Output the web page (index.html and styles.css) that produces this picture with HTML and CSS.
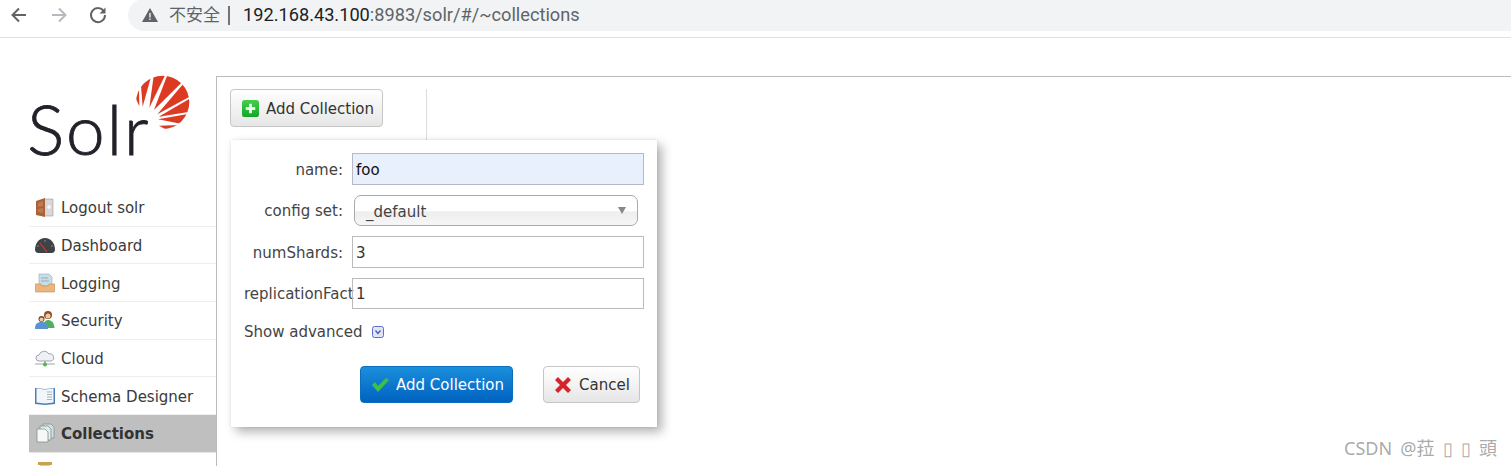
FILE: index.html
```html
<!DOCTYPE html>
<html lang="zh">
<head>
<meta charset="utf-8">
<title>Solr Admin</title>
<link rel="stylesheet" href="styles.css">
</head>
<body>
<header class="chrome">
  <svg class="nav-btn" viewBox="0 0 20 20"><path d="M17 10H4M10 3.500 3.500 10l6.500 6.500" fill="none" stroke="#5f6368" stroke-width="2"/></svg>
  <svg class="nav-btn fwd" viewBox="0 0 20 20"><path d="M3 10h13M10 3.500 16.500 10 10 16.500" fill="none" stroke="#b6b9bd" stroke-width="2"/></svg>
  <svg class="nav-btn reload" viewBox="0 0 20 20"><path d="M16 6.500A7 7 0 1 0 17 10" fill="none" stroke="#5f6368" stroke-width="2"/><path d="M17.500 2.500v6h-6z" fill="#5f6368"/></svg>
  <div class="omnibox">
    <svg class="warn" viewBox="0 0 16 16"><path d="M8 1 16 15H0z" fill="#5f6368"/><path d="M7.300 6h1.400v4.500H7.300zM7.300 11.500h1.400V13H7.300z" fill="#f1f3f4"/></svg>
    <span class="insecure">不安全</span>
    <span class="pipe"></span>
    <span class="url"><span class="host">192.168.43.100</span>:8983/solr/#/~collections</span>
  </div>
</header>

<div class="page">
  <aside class="sidebar">
    <svg class="logo" viewBox="0 0 540 340">
      <defs><clipPath id="sun"><circle cx="428" cy="112" r="80"/></clipPath></defs>
      <g clip-path="url(#sun)" fill="#dc3a22">
        <path d="M347 100 358 124 357 70 340 70z"/>
        <path d="M362 50 396 25 368 125z"/>
        <path d="M402 25 438 25 388 128z"/>
        <path d="M444 25 486 52 402 135z"/>
        <path d="M490 56 515 92 412 148z"/>
        <path d="M515 98 510 140 416 155z"/>
        <path d="M508 146 490 178 414 163z"/>
        <path d="M480 180 450 200 417 182z"/>
      </g>
      <text class="logo-text" x="22" y="270">Solr</text>
    </svg>
    <nav class="menu">
      <a class="item"><svg class="ico" viewBox="0 0 20 20"><path d="M9 2h9v17H9z" fill="#d8d8d8" stroke="#999" stroke-width=".6"/><path d="M1 4 10 1v19l-9-2z" fill="#a8623a"/><path d="M3 6l5-2v5l-5 1zM3 12l5-1v5l-5-1z" fill="#c07a4c"/><path d="M12 10h4M14 8v4" stroke="#fff" stroke-width="1.200"/></svg>Logout solr</a>
      <a class="item"><svg class="ico" viewBox="0 0 20 20"><path d="M0 15C0 8 4 3 10 3s10 5 10 12c0 2-2 3-3 3H3c-1 0-3-1-3-3z" fill="#3f4348"/><path d="M5 8l7 9" stroke="#d9352a" stroke-width="1.200"/><path d="M2 11h2M16 11h2M10 5v2" stroke="#888"/></svg>Dashboard</a>
      <a class="item"><svg class="ico" viewBox="0 0 20 20"><path d="M4 1h10l3 3v9H4z" fill="#c6dfe6" stroke="#9ab" stroke-width=".6"/><path d="M6 5h7M6 8h8" stroke="#9ab"/><path d="M0 11h6l1 2h6l1-2h6v7a1 1 0 0 1-1 1H1a1 1 0 0 1-1-1z" fill="#eab67e" stroke="#c58a4e" stroke-width=".6"/></svg>Logging</a>
      <a class="item"><svg class="ico" viewBox="0 0 20 20"><circle cx="13" cy="5" r="4" fill="#8c4f2c"/><circle cx="13" cy="6" r="2.500" fill="#f0c8a0"/><path d="M8 18c0-5 2-8 5-8s6 2 6.500 8z" fill="#4faf64"/><circle cx="6.500" cy="9" r="3" fill="#6b4a30"/><circle cx="6.500" cy="9.500" r="2" fill="#f0c8a0"/><path d="M0 19c0-5 2-7 6.500-7S13 14 13 19z" fill="#5a93cf"/></svg>Security</a>
      <a class="item"><svg class="ico" viewBox="0 0 20 20"><path d="M4 13a3 3 0 0 1 0-6 5.500 5.500 0 0 1 10-1 3.500 3.500 0 0 1 2 7z" fill="#eef0f4" stroke="#8b8fa0" stroke-width=".8"/><path d="M0 16h20" stroke="#9aa" stroke-width="1"/><path d="M10 13v3" stroke="#5a5"/><circle cx="10" cy="16.500" r="2" fill="#4cb848"/></svg>Cloud</a>
      <a class="item"><svg class="ico" viewBox="0 0 20 20"><path d="M0 2l10 1 10-1v16l-10 1-10-1z" fill="#4a7fb5"/><path d="M1.500 2.500 10 3.500v14l-8.500-1zM18.500 2.500 10 3.500v14l8.500-1z" fill="#f3f6f8"/><path d="M12 6h5M12 8.500h5M12 11h5M12 13.500h5" stroke="#a9b4bd"/></svg>Schema Designer</a>
      <a class="item active"><svg class="ico" viewBox="0 0 20 20"><path d="M8 1h8l3 3v11H8z" fill="#d5dfdd" stroke="#7d9490" stroke-width=".8"/><path d="M5 3h8l3 3v11H5z" fill="#e4eaea" stroke="#7d9490" stroke-width=".8"/><path d="M2 6h8l3 3v10H2z" fill="#f6f8f8" stroke="#7d9490" stroke-width=".8"/></svg>Collections</a>
      <a class="item"><svg class="ico" viewBox="0 0 20 20"><path d="M3 1h14v3H3z" fill="#c9a24f"/><path d="M5 4h10v15H5z" fill="#e3cf9a"/></svg></a>
    </nav>
  </aside>

  <main class="main">
    <div class="toolbar">
      <button class="btn add-top" type="button">
        <svg class="btn-ico" viewBox="0 0 18 18"><defs><linearGradient id="grn" x1="0" y1="0" x2="0" y2="1"><stop offset="0" stop-color="#45d04a"/><stop offset="1" stop-color="#12a52b"/></linearGradient></defs><rect width="18" height="18" rx="3" fill="url(#grn)"/><path d="M9 4v10M4 9h10" stroke="#e9fbe9" stroke-width="3"/></svg>Add Collection
      </button>
      <div class="divider"></div>
    </div>
  </main>
</div>

<form class="dialog">
  <div class="row row-name"><label class="lbl">name:</label><div class="field filled">foo</div></div>
  <div class="row row-config"><label class="lbl">config set:</label><div class="select">_default<span class="caret"></span></div></div>
  <div class="row row-shards"><label class="lbl">numShards:</label><div class="field">3</div></div>
  <div class="row row-repl"><label class="lbl flush">replicationFact</label><div class="field">1</div></div>
  <div class="advanced">Show advanced
    <svg class="adv-ico" viewBox="0 0 12 12"><rect x=".5" y=".5" width="11" height="11" rx="2" fill="#dfe5f7" stroke="#5c6fc4"/><path d="M3.500 4.500 6 7.500l2.500-3" fill="none" stroke="#4a5ab0" stroke-width="1.300"/></svg>
  </div>
  <div class="actions">
    <button class="btn primary" type="button"><svg class="check" viewBox="0 0 18 16"><path d="M1 8l3-3 3 4 8-8 3 2L7 15z" fill="#3fbf4a"/></svg>Add Collection</button>
    <button class="btn cancel" type="button"><svg class="cross" viewBox="0 0 16 16"><path d="M3 0l5 5 5-5 3 3-5 5 5 5-3 3-5-5-5 5-3-3 5-5-5-5z" fill="#d2262b"/></svg>Cancel</button>
  </div>
</form>

<div class="watermark">CSDN @菈 ▯ ▯ 頭</div>
</body>
</html>
```

FILE: styles.css
```css
* { box-sizing: border-box; }
html, body { margin: 0; height: 466px; overflow: hidden; background: #fff; }
body { font-family: "DejaVu Sans", Verdana, sans-serif; font-size: 15px; color: #333; position: relative; }

.chrome { height: 38px; display: flex; align-items: flex-start; border-bottom: 1px solid #dfe1e5; }
.nav-btn { width: 20px; height: 20px; margin: 5px 0 0 9px; flex: none; }
.nav-btn.fwd { margin-left: 20px; }
.nav-btn.reload { margin-left: 19px; }
.omnibox { margin-left: 20px; flex: 1; height: 32px; margin-top: -1px; background: #f1f3f4; border-radius: 16px 0 0 16px; display: flex; align-items: center; padding-left: 14px; color: #5f6368; }
.warn { width: 16px; height: 16px; flex: none; }
.insecure { margin-left: 11px; font-size: 17px; line-height: 20px; margin-top: -2px; font-family: "Noto Sans CJK SC", sans-serif; }
.pipe { width: 2px; height: 19px; background: #70757a; margin: 0 13px 0 8px; }
.url { font-size: 18.2px; line-height: 20px; font-family: Roboto, sans-serif; }
.host { color: #202124; }

.page { display: flex; height: 428px; }
.sidebar { width: 216px; height: 428px; flex: none; padding-left: 20px; padding-top: 27px; overflow: hidden; }
.logo { display: block; width: 180px; height: 113.33px; }
.logo-text { font-family: Lato, sans-serif; font-weight: 300; font-size: 208px; letter-spacing: 6px; fill: #22222a; stroke: #22222a; stroke-width: 2.5px; }
.menu { margin: 10.67px 0 0 9px; }
.item { display: flex; align-items: center; height: 37.7px; padding: 2px 0 0 6px; border-bottom: 1px solid #eee; white-space: nowrap; color: #3a3a3a; }
.item.active { background: #bfbfbf; font-weight: bold; color: #333; border-bottom-color: #e6e6e6; }
.ico { width: 20px; height: 20px; margin: -2px 6px 0 0; flex: none; }

.main { flex: 1; margin-top: 38px; border-top: 1px solid #bbb; border-left: 1px solid #bbb; }
.toolbar { display: flex; padding: 12px 0 0 13px; }
.divider { width: 1px; height: 51px; background: #ddd; margin-left: 43px; }

.btn { display: inline-flex; align-items: center; font: inherit; color: #333; height: 38px; border: 1px solid #c6c6c6; border-radius: 4px; background: linear-gradient(#fff, #e6e6e6); padding: 0 9px 0 11px; white-space: nowrap; }
.add-top { width: 153px; padding-top: 2px; }
.btn-ico { width: 17px; height: 17px; margin: -2px 7px 0 0; flex: none; }

.dialog { position: absolute; left: 231px; top: 140px; width: 426px; height: 287px; background: #fff; box-shadow: 5px 5px 10px rgba(0,0,0,.3), 0 0 3px rgba(0,0,0,.1); padding: 13px 13px 0; }
.row { display: flex; align-items: center; }
.row-config, .row-shards, .row-repl { margin-top: 10px; }
.lbl { width: 108px; flex: none; text-align: right; padding: 1px 9px 0 0; white-space: nowrap; color: #444; }
.lbl.flush { text-align: left; padding-right: 0; }
.field { width: 292px; height: 32px; border: 1px solid #bbb; padding-left: 3px; line-height: 32px; color: #333; flex: none; }
.row-repl .field { height: 31px; line-height: 31px; }
.field.filled { background: #e8f0fe; border-color: #b5bac4; color: #111; }
.select { position: relative; width: 284px; height: 31px; margin-left: 2px; border: 1px solid #aaa; border-radius: 7px; background: linear-gradient(#fff 0 50%, #eee 55%, #f6f6f6); padding-left: 11px; line-height: 33px; color: #444; }
.caret { position: absolute; right: 11px; top: 11px; border: 4.5px solid transparent; border-top: 7px solid #888; border-bottom: 0; }
.advanced { display: flex; align-items: center; margin-top: 13px; height: 20px; color: #444; }
.adv-ico { width: 12px; height: 12px; margin-left: 9px; }
.actions { display: flex; justify-content: flex-end; gap: 30px; margin-top: 24px; padding-right: 4px; }
.btn.primary { width: 153px; height: 37px; background: linear-gradient(#1a8fdc, #0062c0); border-color: #0b6fbc; color: #fff; padding-left: 10px; }
.check { width: 18px; height: 16px; margin-right: 7px; flex: none; }
.btn.cancel { width: 97px; height: 37px; }
.cross { width: 16px; height: 16px; margin-right: 8px; flex: none; }

.watermark { position: absolute; right: 14px; bottom: 6px; font-family: "Noto Sans", "Noto Sans CJK TC", sans-serif; font-size: 18px; word-spacing: 3.5px; color: rgba(120,120,120,.65); }
```
